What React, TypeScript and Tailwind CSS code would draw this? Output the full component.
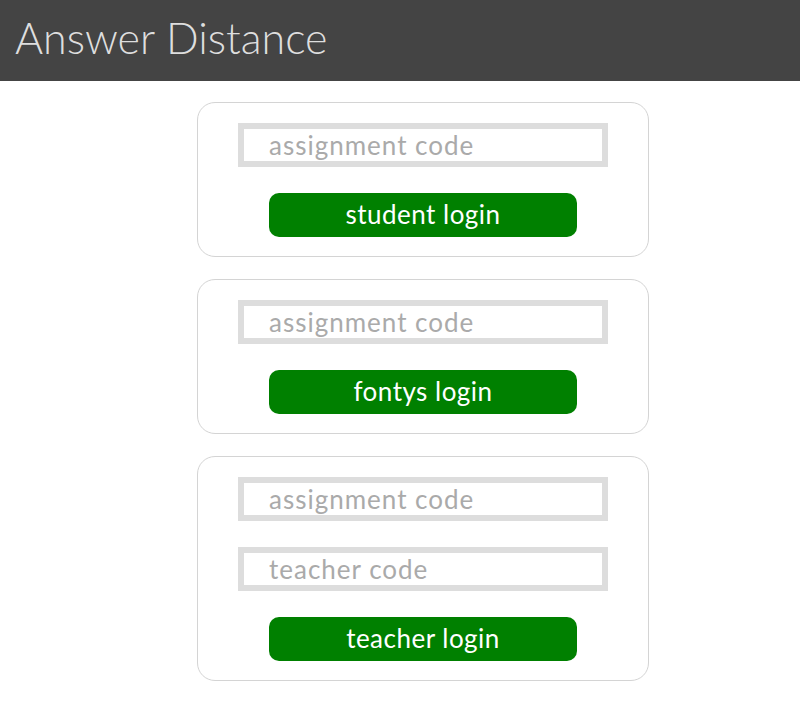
const Field = ({ placeholder }: { placeholder: string }) => (
  <input
    type="text"
    placeholder={placeholder}
    className="w-[370px] h-[44px] border-[6px] border-[#dddddd] bg-white pl-[25px] text-[26px] tracking-[1px] text-[#999] placeholder:text-[#aaaaaa] outline-none"
  />
);

const LoginButton = ({ label }: { label: string }) => (
  <button className="w-[308px] h-[44px] rounded-[10px] bg-[#008000] text-white text-[26px] tracking-[0.5px] leading-none pb-[2px]">
    {label}
  </button>
);

const Card = ({ fields, label }: { fields: string[]; label: string }) => (
  <div className="w-[452px] ml-[197px] rounded-[18px] border border-[#d4d4d4] pt-[20px] pb-[19px] flex flex-col items-center gap-[26px]">
    {fields.map((f) => (
      <Field key={f} placeholder={f} />
    ))}
    <LoginButton label={label} />
  </div>
);

export default function App() {
  return (
    <div className="min-h-[721px] bg-white font-['Lato','Open_Sans',sans-serif]">
      <header className="h-[81px] bg-[#444444] flex items-center pl-[15px] pb-[6px]">
        <h1 className="text-[43px] font-light text-[#dedede] leading-none">Answer Distance</h1>
      </header>
      <main className="pt-[21px] flex flex-col gap-[22px]">
        <Card fields={["assignment code"]} label="student login" />
        <Card fields={["assignment code"]} label="fontys login" />
        <Card fields={["assignment code", "teacher code"]} label="teacher login" />
      </main>
    </div>
  );
}
